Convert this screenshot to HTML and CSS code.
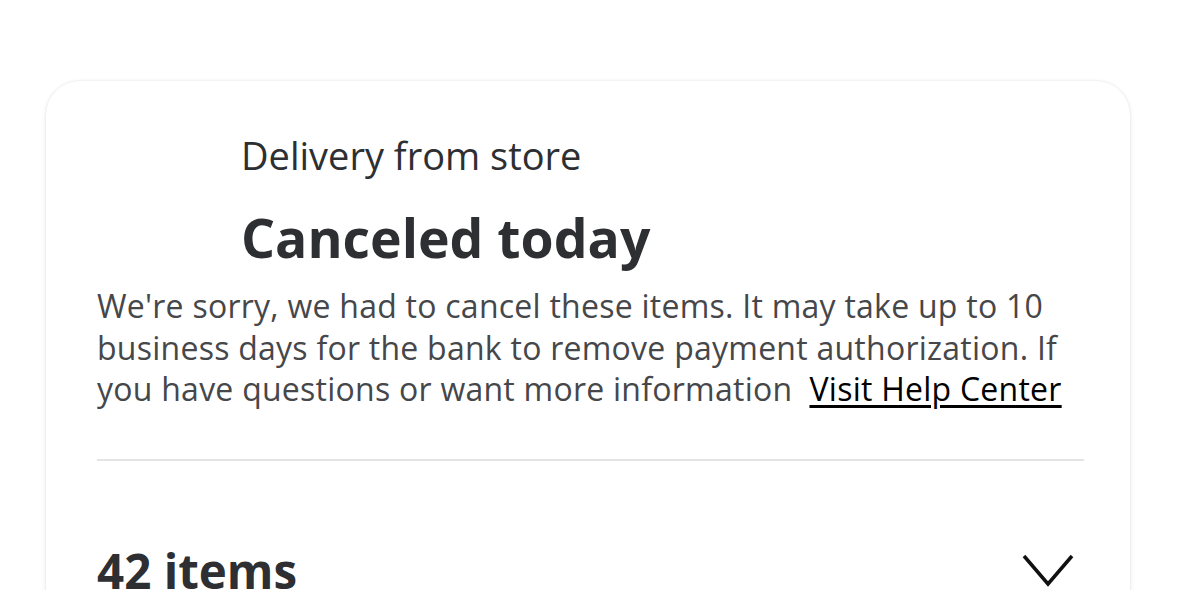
FILE: index.html
```html
<!DOCTYPE html>
<html lang="en">
<head>
<meta charset="utf-8">
<title>Order</title>
<link rel="stylesheet" href="styles.css">
</head>
<body>
<main class="page">
  <section class="card">
    <header class="status">
      <div class="status-kind">Delivery from store</div>
      <h1 class="status-title">Canceled today</h1>
    </header>
    <p class="message">We're sorry, we had to cancel these items. It may take up to 10 business days for the bank to remove payment authorization. If you have questions or want more information&nbsp; <a class="help-link" href="#">Visit Help Center</a></p>
    <hr class="divider">
    <div class="items-row">
      <h2 class="items-count">42 items</h2>
      <svg class="chevron" width="52" height="36" viewBox="0 0 52 36" aria-hidden="true">
        <path d="M2 3 L26 31 L50 3" fill="none" stroke="#111" stroke-width="3.5"/>
      </svg>
    </div>
  </section>
</main>
</body>
</html>
```
FILE: styles.css
```css
html, body {
  margin: 0;
  padding: 0;
  background: #ffffff;
}
body {
  font-family: "Open Sans", "Noto Sans", sans-serif;
  color: #2e2f32;
  overflow: hidden;
  height: 590px;
}
.page {
  padding: 81px 49px 0 46px;
}
.card {
  background: #fff;
  border-radius: 34px;
  box-shadow: 0 0 3px rgba(0,0,0,0.10), 0 2px 6px rgba(0,0,0,0.06);
  padding: 52px 46px 40px 51px;
}
.status {
  padding-left: 144px;
}
.status-kind {
  font-size: 38px;
  line-height: 44px;
  font-weight: 400;
  color: #2e2f32;
}
.status-title {
  margin: 31px 0 0;
  font-size: 53.5px;
  line-height: 60px;
  font-weight: 700;
  color: #2e2f32;
}
.message {
  margin: 17px 0 0;
  font-size: 32px;
  line-height: 41.5px;
  letter-spacing: 0.25px;
  color: #46474a;
}
.help-link {
  color: #000;
  text-decoration: underline;
  text-underline-offset: 4px;
}
.divider {
  border: 0;
  height: 2px;
  background: #e3e4e5;
  margin: 49px 0 0;
}
.items-row {
  display: flex;
  align-items: center;
  justify-content: space-between;
  padding-top: 82px;
}
.items-count {
  margin: 0;
  font-size: 47.5px;
  line-height: 56px;
  font-weight: 700;
  color: #2e2f32;
}
.chevron {
  margin-right: 10px;
}
```
